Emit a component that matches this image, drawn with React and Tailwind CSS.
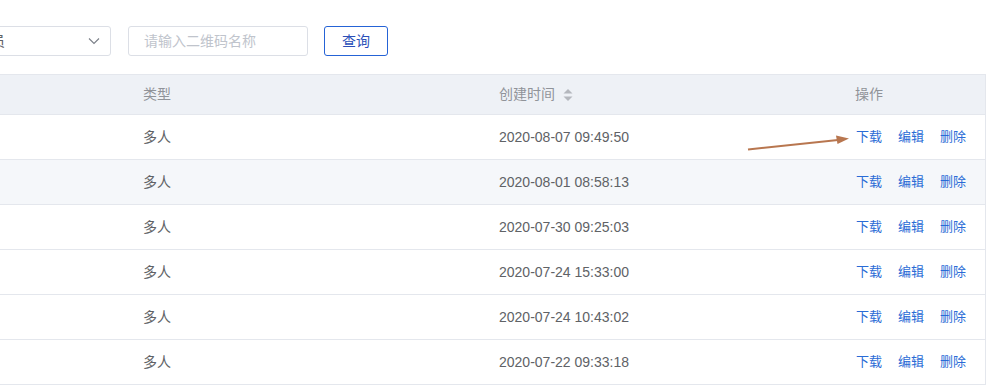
import React from "react";

const rows = [
  { type: "多人", time: "2020-08-07 09:49:50" },
  { type: "多人", time: "2020-08-01 08:58:13", hover: true },
  { type: "多人", time: "2020-07-30 09:25:03" },
  { type: "多人", time: "2020-07-24 15:33:00" },
  { type: "多人", time: "2020-07-24 10:43:02" },
  { type: "多人", time: "2020-07-22 09:33:18" },
];

const cols = "grid grid-cols-[131px_356px_356px_142px]";

function SortIcon() {
  return (
    <svg width="10" height="12" viewBox="0 0 10 12" className="ml-[8px]">
      <path d="M5 0 L9.5 4.5 H0.5 Z" fill="#b4b7bd" />
      <path d="M5 12 L9.5 7.5 H0.5 Z" fill="#b4b7bd" />
    </svg>
  );
}

export default function App() {
  return (
    <div
      className="relative w-[1002px] h-[385px] overflow-hidden bg-white text-[14px]"
      style={{ fontFamily: '"Liberation Sans", "Noto Sans CJK SC", sans-serif' }}
    >
      {/* 查询条件 */}
      <div className="flex items-center pt-[26px]">
        <div className="-ml-[66px] w-[177px] h-[30px] border border-[#dcdfe6] rounded-[3px] flex items-center justify-between pl-[14px] pr-[10px] text-[#606266]">
          <span className="leading-none">全部人员</span>
          <svg width="12" height="8" viewBox="0 0 12 8">
            <path d="M1 1.5 L6 6.5 L11 1.5" fill="none" stroke="#7a7f87" strokeWidth="1.1" />
          </svg>
        </div>
        <div className="ml-[17px] w-[180px] h-[30px] border border-[#dcdfe6] rounded-[3px] flex items-center pl-[15px] text-[#c0c4cc]">
          <span className="leading-none">请输入二维码名称</span>
        </div>
        <button className="ml-[16px] w-[64px] h-[30px] border border-[#2563d6] rounded-[3px] text-[#2b4fb8] leading-none">
          查询
        </button>
      </div>

      {/* 表格 */}
      <div className="mt-[18px] w-[986px] border-r border-[#e4e7ed]">
        <div className={`${cols} h-[41px] items-center border-y border-[#e4e7ed] bg-[#eef1f6] text-[#909399]`}>
          <div />
          <div className="pl-[12px]">类型</div>
          <div className="pl-[12px] flex items-center">
            创建时间
            <SortIcon />
          </div>
          <div className="pl-[12px]">操作</div>
        </div>
        {rows.map((r, i) => (
          <div
            key={i}
            className={`${cols} h-[45px] items-center border-b border-[#e4e7ed] text-[#606266] ${r.hover ? "bg-[#f5f7fa]" : "bg-white"}`}
          >
            <div />
            <div className="pl-[12px]">{r.type}</div>
            <div className="pl-[12px]">{r.time}</div>
            <div className="pl-[13px] flex gap-[16px] text-[13px] text-[#2a6bd6]">
              <span>下载</span>
              <span>编辑</span>
              <span>删除</span>
            </div>
          </div>
        ))}
      </div>

      {/* 标注箭头 */}
      <svg className="absolute left-0 top-0" width="1002" height="385">
        <line x1="748" y1="149.5" x2="838" y2="140" stroke="#b8764f" strokeWidth="2" />
        <path d="M849 138.6 L836 135.5 L837.5 144 Z" fill="#b8764f" />
      </svg>
    </div>
  );
}
